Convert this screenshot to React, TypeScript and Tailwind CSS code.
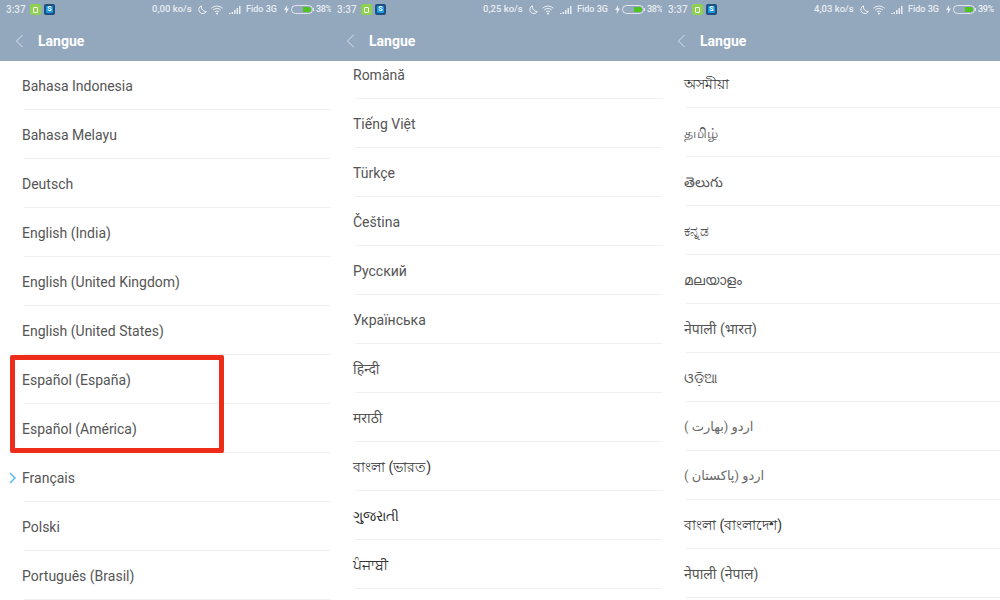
const panels = [
  {
    speed: "0,00 ko/s",
    battery: "38%",
    width: "w-[331px]",
    listOffset: "mt-0",
    items: [
      "Bahasa Indonesia",
      "Bahasa Melayu",
      "Deutsch",
      "English (India)",
      "English (United Kingdom)",
      "English (United States)",
      "Español (España)",
      "Español (América)",
      "Français",
      "Polski",
      "Português (Brasil)",
    ],
  },
  {
    speed: "0,25 ko/s",
    battery: "38%",
    width: "w-[331px]",
    listOffset: "-mt-[11px]",
    items: [
      "Română",
      "Tiếng Việt",
      "Türkçe",
      "Čeština",
      "Русский",
      "Українська",
      "हिन्दी",
      "मराठी",
      "বাংলা (ভারত)",
      "ગુજરાતી",
      "ਪੰਜਾਬੀ",
    ],
  },
  {
    speed: "4,03 ko/s",
    battery: "39%",
    width: "w-[338px]",
    listOffset: "-mt-[2px]",
    items: [
      "অসমীয়া",
      "தமிழ்",
      "తెలుగు",
      "ಕನ್ನಡ",
      "മലയാളം",
      "नेपाली (भारत)",
      "ଓଡ଼ିଆ",
      "اردو (بھارت )",
      "اردو (پاکستان )",
      "বাংলা (বাংলাদেশ)",
      "नेपाली (नेपाल)",
    ],
  },
];

// these fall back to thin fonts here, so they get a darker ink
const thinItems = ["বাংলা (ভারত)", "ગુજરાતી", "ਪੰਜਾਬੀ", "বাংলা (বাংলাদেশ)", "অসমীয়া"];
const urduItems = ["اردو (بھارت )", "اردو (پاکستان )"];

function itemClass(item: string) {
  if (urduItems.includes(item)) return "text-[13px] text-[#6a6a6a]";
  if (thinItems.includes(item)) return "text-[14px] text-[#333333]";
  return "text-[14px] text-[#555555]";
}

function StatusBar({ speed, battery }: { speed: string; battery: string }) {
  return (
    <div className="flex h-[19px] w-[331px] items-center text-[9.5px] font-medium text-white/80">
      <span className="ml-[6px] w-[24px] text-[10px] text-white/75">3:37</span>
      <div className="flex h-[11px] w-[11px] items-center justify-center rounded-[2px] bg-[#8ed14f]">
        <div className="h-[6px] w-[5px] rounded-[1px] border border-white" />
      </div>
      <div className="ml-[3px] flex h-[11px] w-[11px] items-center justify-center rounded-[2px] bg-[#1d4f80]">
        <div className="flex h-[7px] w-[7px] items-center justify-center rounded-[1px] bg-[#1e9be0] text-[7px] font-bold leading-none text-white">
          S
        </div>
      </div>
      <div className="ml-auto flex items-center">
        <span className="w-[46px]">{speed}</span>
        <svg width="9" height="10" viewBox="0 0 9 10" fill="none" stroke="white" strokeOpacity="0.8" strokeWidth="1">
          <path d="M3.5 .8 A4 4 0 1 0 8.3 6.5 A4.6 4.6 0 0 1 3.5 .8 Z" />
        </svg>
        <svg className="ml-[4px]" width="12" height="10" viewBox="0 0 12 10" fill="none" stroke="white" strokeOpacity="0.8" strokeWidth="1">
          <path d="M.5 3.2 A8 8 0 0 1 11.5 3.2" />
          <path d="M2.2 5 A5.5 5.5 0 0 1 9.8 5" />
          <path d="M4 6.8 A3 3 0 0 1 8 6.8" />
          <circle cx="6" cy="8.6" r=".6" fill="white" />
        </svg>
        <svg className="ml-[6px]" width="12" height="8" viewBox="0 0 12 8" fill="white" fillOpacity="0.8">
          <rect x="0" y="7" width="1.5" height="1" />
          <rect x="2.5" y="6" width="1.5" height="2" />
          <rect x="5" y="4" width="1.5" height="4" />
          <rect x="7.5" y="2" width="1.5" height="6" />
          <rect x="10" y="0" width="1.5" height="8" />
        </svg>
        <span className="ml-[5px] w-[38px] text-[9px]">Fido 3G</span>
        <svg width="5" height="9" viewBox="0 0 5 9" fill="white" fillOpacity="0.8">
          <path d="M3.2 0 L0 5 H2 L1.6 9 L5 3.6 H2.8 Z" />
        </svg>
        <div className="ml-[2px] flex h-[9px] w-[22px] justify-end rounded-full border border-white/70 py-px pr-px">
          <div className="w-[8px] rounded-r-full bg-[#4fc41e]" />
        </div>
        <div className="h-[3px] w-[1px] bg-white/70" />
        <span className="ml-[2px] w-[15px] whitespace-nowrap text-[9px] tracking-[-0.4px]">{battery}</span>
      </div>
    </div>
  );
}

export default function App() {
  return (
    <div className="relative flex h-[600px] w-[1000px] overflow-hidden bg-white font-['Roboto','Noto_Sans','DejaVu_Sans',sans-serif]">
      {panels.map((panel, i) => (
        <div key={i} className={`${panel.width} flex h-full flex-col overflow-hidden`}>
          <div className="relative z-10 h-[61px] shrink-0 bg-[#93a7bd]">
            <StatusBar speed={panel.speed} battery={panel.battery} />
            <div className="mt-[9px] flex h-[26px] items-center">
              <svg className="ml-[15px]" width="9" height="14" viewBox="0 0 9 14" fill="none" stroke="white" strokeOpacity="0.65" strokeWidth="1">
                <path d="M7.5 1 L1.5 7 L7.5 13" />
              </svg>
              <span className="ml-[14px] text-[14px] font-bold text-white">Langue</span>
            </div>
          </div>
          <div className={panel.listOffset}>
            {panel.items.map((item) => (
              <div key={item} className="relative ml-[24px] flex h-[49px] items-center border-b border-[#f0f0f0] pt-[2px]">
                {item === "Français" && (
                  <svg className="absolute -left-[15px] top-[19px]" width="7" height="12" viewBox="0 0 7 12" fill="none" stroke="#4db5f0" strokeWidth="1.4">
                    <path d="M1 1 L6 6 L1 11" />
                  </svg>
                )}
                <span className={`-ml-[2px] ${itemClass(item)}`} dir="ltr">
                  {item}
                </span>
              </div>
            ))}
          </div>
        </div>
      ))}
      <div className="absolute left-[10px] top-[355px] h-[98px] w-[214px] rounded-[2px] border-[5px] border-[#ee2c1a]" />
    </div>
  );
}
